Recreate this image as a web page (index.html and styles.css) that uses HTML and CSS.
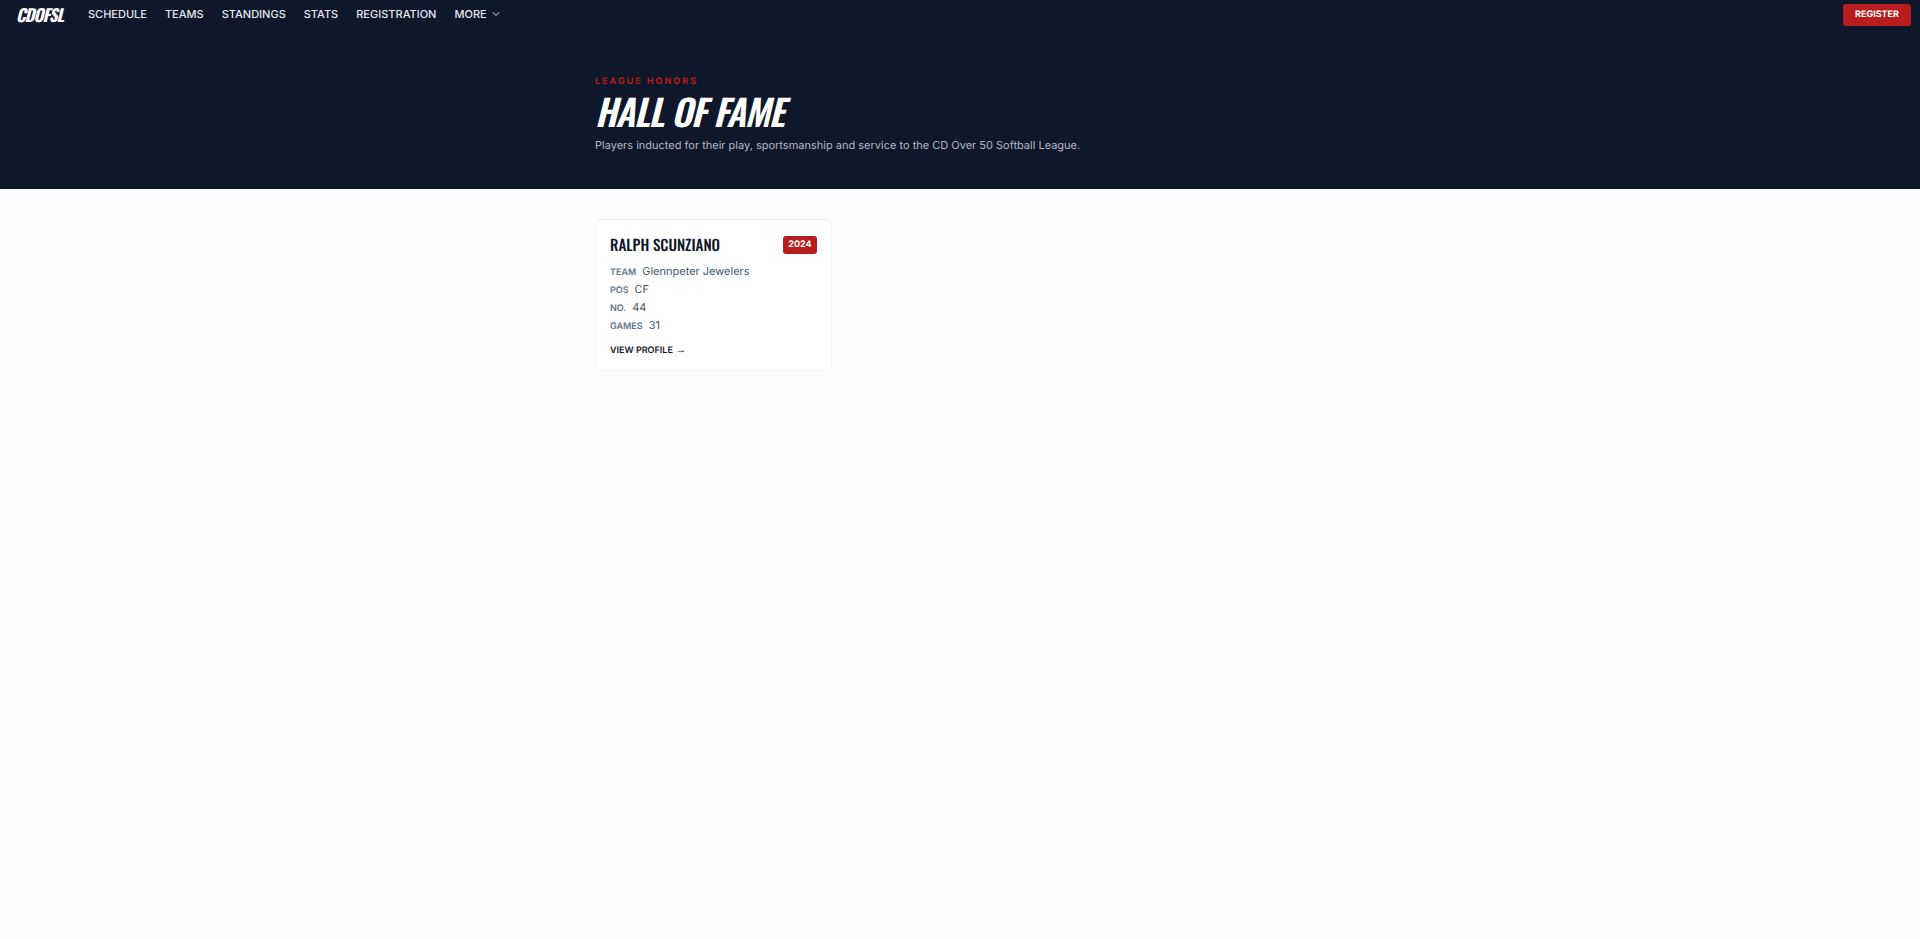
FILE: index.html
```
<!DOCTYPE html>
<html lang="en">
<head>
  <meta charset="UTF-8">
  <meta name="viewport" content="width=device-width, initial-scale=1.0">
  <title>Hall of Fame - CDOFSL</title>
  <link rel="stylesheet" href="styles.css">
</head>
<body>
  <header class="site-header">
    <a class="logo" href="#">CDOFSL</a>
    <nav class="nav">
      <a href="#">Schedule</a>
      <a href="#">Teams</a>
      <a href="#">Standings</a>
      <a href="#">Stats</a>
      <a href="#">Registration</a>
      <button class="more" type="button">
        More
        <svg class="chevron" viewBox="0 0 24 24" aria-hidden="true"><path d="M6 9l6 6 6-6"/></svg>
      </button>
    </nav>
    <a class="register" href="#">Register</a>
  </header>

  <section class="hero">
    <div class="container">
      <p class="eyebrow">League Honors</p>
      <h1>Hall of Fame</h1>
      <p class="intro">Players inducted for their play, sportsmanship and service to the CD Over 50 Softball League.</p>
    </div>
  </section>

  <main class="container inductees">
    <article class="card">
      <div class="card-head">
        <h2>Ralph Scunziano</h2>
        <span class="year">2024</span>
      </div>
      <dl class="facts">
        <div class="fact"><dt>Team</dt><dd>Glennpeter Jewelers</dd></div>
        <div class="fact"><dt>Pos</dt><dd>CF</dd></div>
        <div class="fact"><dt>No.</dt><dd>44</dd></div>
        <div class="fact"><dt>Games</dt><dd>31</dd></div>
      </dl>
      <a class="profile" href="#">View Profile <span class="arrow">→</span></a>
    </article>
  </main>
</body>
</html>
```

FILE: styles.css
```
* {
  box-sizing: border-box;
}

body {
  margin: 0;
  background: #fafcfe;
  color: #0f172a;
  font-family: Inter, sans-serif;
  font-size: 11px;
  line-height: 18px;
  text-rendering: geometricPrecision;
}

a {
  color: inherit;
  text-decoration: none;
}

h1,
h2,
p,
dl,
dd {
  margin: 0;
}

.site-header {
  display: flex;
  align-items: center;
  height: 30px;
  padding: 0 9px 0 16px;
  background: #0f172a;
  color: #fff;
}

.logo,
h1,
h2 {
  font-family: Oswald, "Roboto Condensed", "Liberation Sans Narrow", sans-serif;
  text-transform: uppercase;
}

.logo {
  width: 72px;
  font-size: 17px;
  font-weight: 700;
  font-style: italic;
  letter-spacing: -1px;
}

.nav {
  display: flex;
  flex: 1;
  gap: 18px;
  padding-bottom: 2px;
  color: #e2e8f0;
  font-weight: 500;
  text-transform: uppercase;
}

.more {
  display: flex;
  align-items: center;
  gap: 3px;
  padding: 0;
  border: 0;
  background: none;
  color: inherit;
  font: inherit;
  text-transform: inherit;
}

.chevron {
  width: 12px;
  height: 12px;
  fill: none;
  stroke: currentColor;
  stroke-width: 2;
  stroke-linecap: round;
  stroke-linejoin: round;
}

.register {
  padding: 2px 12px;
  border-radius: 3px;
  background: #b91c1c;
  font-size: 9px;
  font-weight: 700;
  text-transform: uppercase;
}

.container {
  max-width: 730px;
  margin: 0 auto;
}

.hero {
  padding: 43px 0 35px;
  background: #0f172a;
}

.eyebrow {
  color: #b91c1c;
  font-size: 9px;
  font-weight: 700;
  letter-spacing: 2px;
  text-transform: uppercase;
}

h1 {
  margin-bottom: 3px;
  color: #fff;
  font-size: 36px;
  font-style: italic;
  font-weight: 600;
  line-height: 42px;
  letter-spacing: -1px;
}

.intro {
  color: #b4bac5;
}

.inductees {
  display: grid;
  grid-template-columns: repeat(3, 1fr);
  gap: 10px;
  padding: 30px 0;
}

.card {
  padding: 15px 14px 11px;
  border: 1px solid #f4f6fa;
  border-top-color: #e5eaf1;
  border-radius: 8px;
  background: #fff;
}

.card-head {
  display: flex;
  align-items: center;
  justify-content: space-between;
  margin-bottom: 7px;
}

h2 {
  font-size: 15px;
  font-weight: 500;
  line-height: 20px;
}

.year {
  padding: 0 5px;
  border-radius: 3px;
  background: #b91c1c;
  color: #fff;
  font-size: 9px;
  font-weight: 700;
}

.fact {
  display: flex;
  align-items: baseline;
  gap: 6px;
  height: 18px;
}

dt {
  color: #64748b;
  font-size: 9px;
  font-weight: 600;
  text-transform: uppercase;
}

dd {
  color: #475569;
}

.profile {
  display: block;
  margin-top: 8px;
  font-size: 9px;
  font-weight: 600;
  text-transform: uppercase;
}

.arrow {
  font-family: "Liberation Sans", sans-serif;
  font-size: 11px;
  line-height: 1;
}
```
